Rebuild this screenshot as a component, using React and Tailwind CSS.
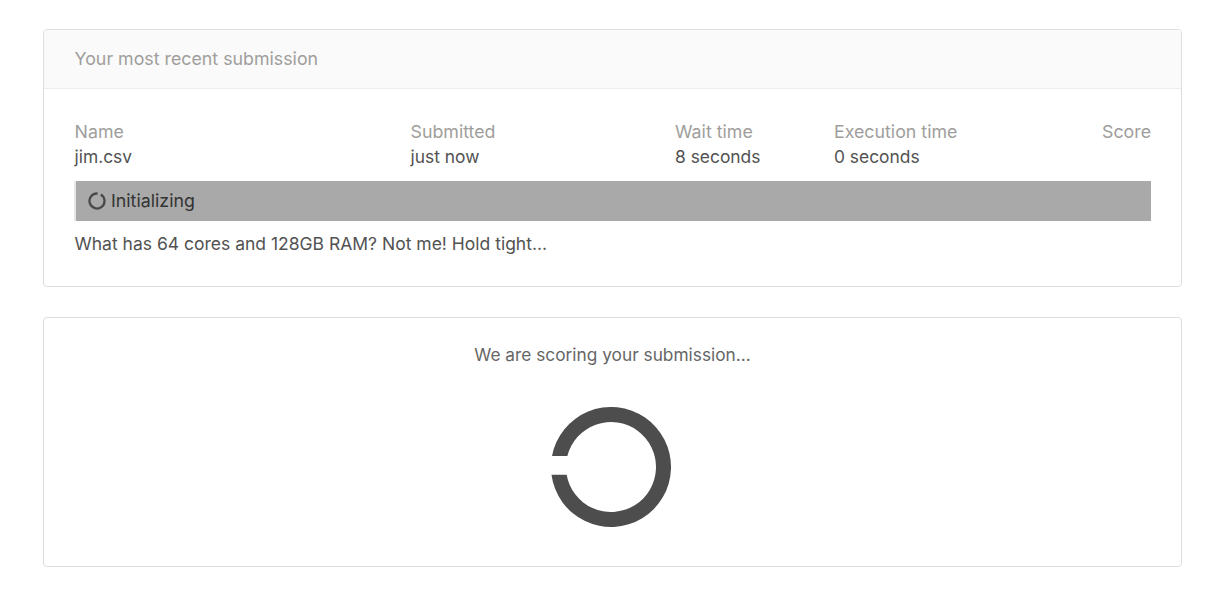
import React from "react";

const Spinner = () => (
  <svg width="120" height="120" viewBox="0 0 120 120" fill="none">
    <path
      d="M 1.02 49 A 60 60 0 1 1 0.5 67.7 L 15.66 67.7 A 45 45 0 1 0 16.37 49 Z"
      fill="#4d4d4d"
    />
  </svg>
);

const SmallSpinner = () => (
  <svg width="18" height="18" viewBox="0 0 18 18" fill="none">
    <path
      d="M 12.75 2.5 A 7.5 7.5 0 1 1 9.6 1.52"
      stroke="#4a4a4a"
      strokeWidth="2.3"
    />
  </svg>
);

const Column = ({ label, value, className }) => (
  <div className={className}>
    <div className="text-[#a09e9c] text-[17.8px] h-[25px]">{label}</div>
    <div className="text-[#525252] text-[17.4px] h-[25px]">{value}</div>
  </div>
);

export default function App() {
  return (
    <div className="min-h-[615px] bg-white pl-[43px] pr-[26px] pt-[29px] font-['Inter',sans-serif] text-[17.5px] leading-[25px]">
      <div className="border border-[#dedede] rounded-[4px] h-[258px] overflow-hidden">
        <div className="h-[59px] bg-[#fafafa] border-b border-[#ededed] pl-[30.5px] pb-[2px] flex items-center text-[#a09e9c] text-[17.8px]">
          Your most recent submission
        </div>
        <div className="pl-[30px] pr-[30px] pt-[30px]">
          <div className="flex">
            <Column label="Name" value="jim.csv" className="w-[336px] pl-[0.5px]" />
            <Column label="Submitted" value="just now" className="w-[265px] pl-[0.5px]" />
            <Column label="Wait time" value="8 seconds" className="w-[159px]" />
            <Column label="Execution time" value="0 seconds" className="w-[200px]" />
            <div className="flex-1 text-right text-[#a09e9c] text-[17.8px]">Score</div>
          </div>
          <div className="mt-[12px] h-[40px] bg-[#a9a9a9] border-l-2 border-[#e6e6e6] pl-[12px] pb-[1px] flex items-center gap-[5px] text-[#333333] text-[17.8px]">
            <SmallSpinner />
            <span>Initializing</span>
          </div>
          <p className="mt-[10px] pl-[0.5px] text-[#525252]">What has 64 cores and 128GB RAM? Not me! Hold tight...</p>
        </div>
      </div>
      <div className="mt-[30px] border border-[#dedede] rounded-[4px] h-[250px] flex flex-col items-center pt-[24px]">
        <p className="text-[#666666] text-[17.3px]">We are scoring your submission...</p>
        <div className="mt-[40px] mr-[3px]">
          <Spinner />
        </div>
      </div>
    </div>
  );
}
